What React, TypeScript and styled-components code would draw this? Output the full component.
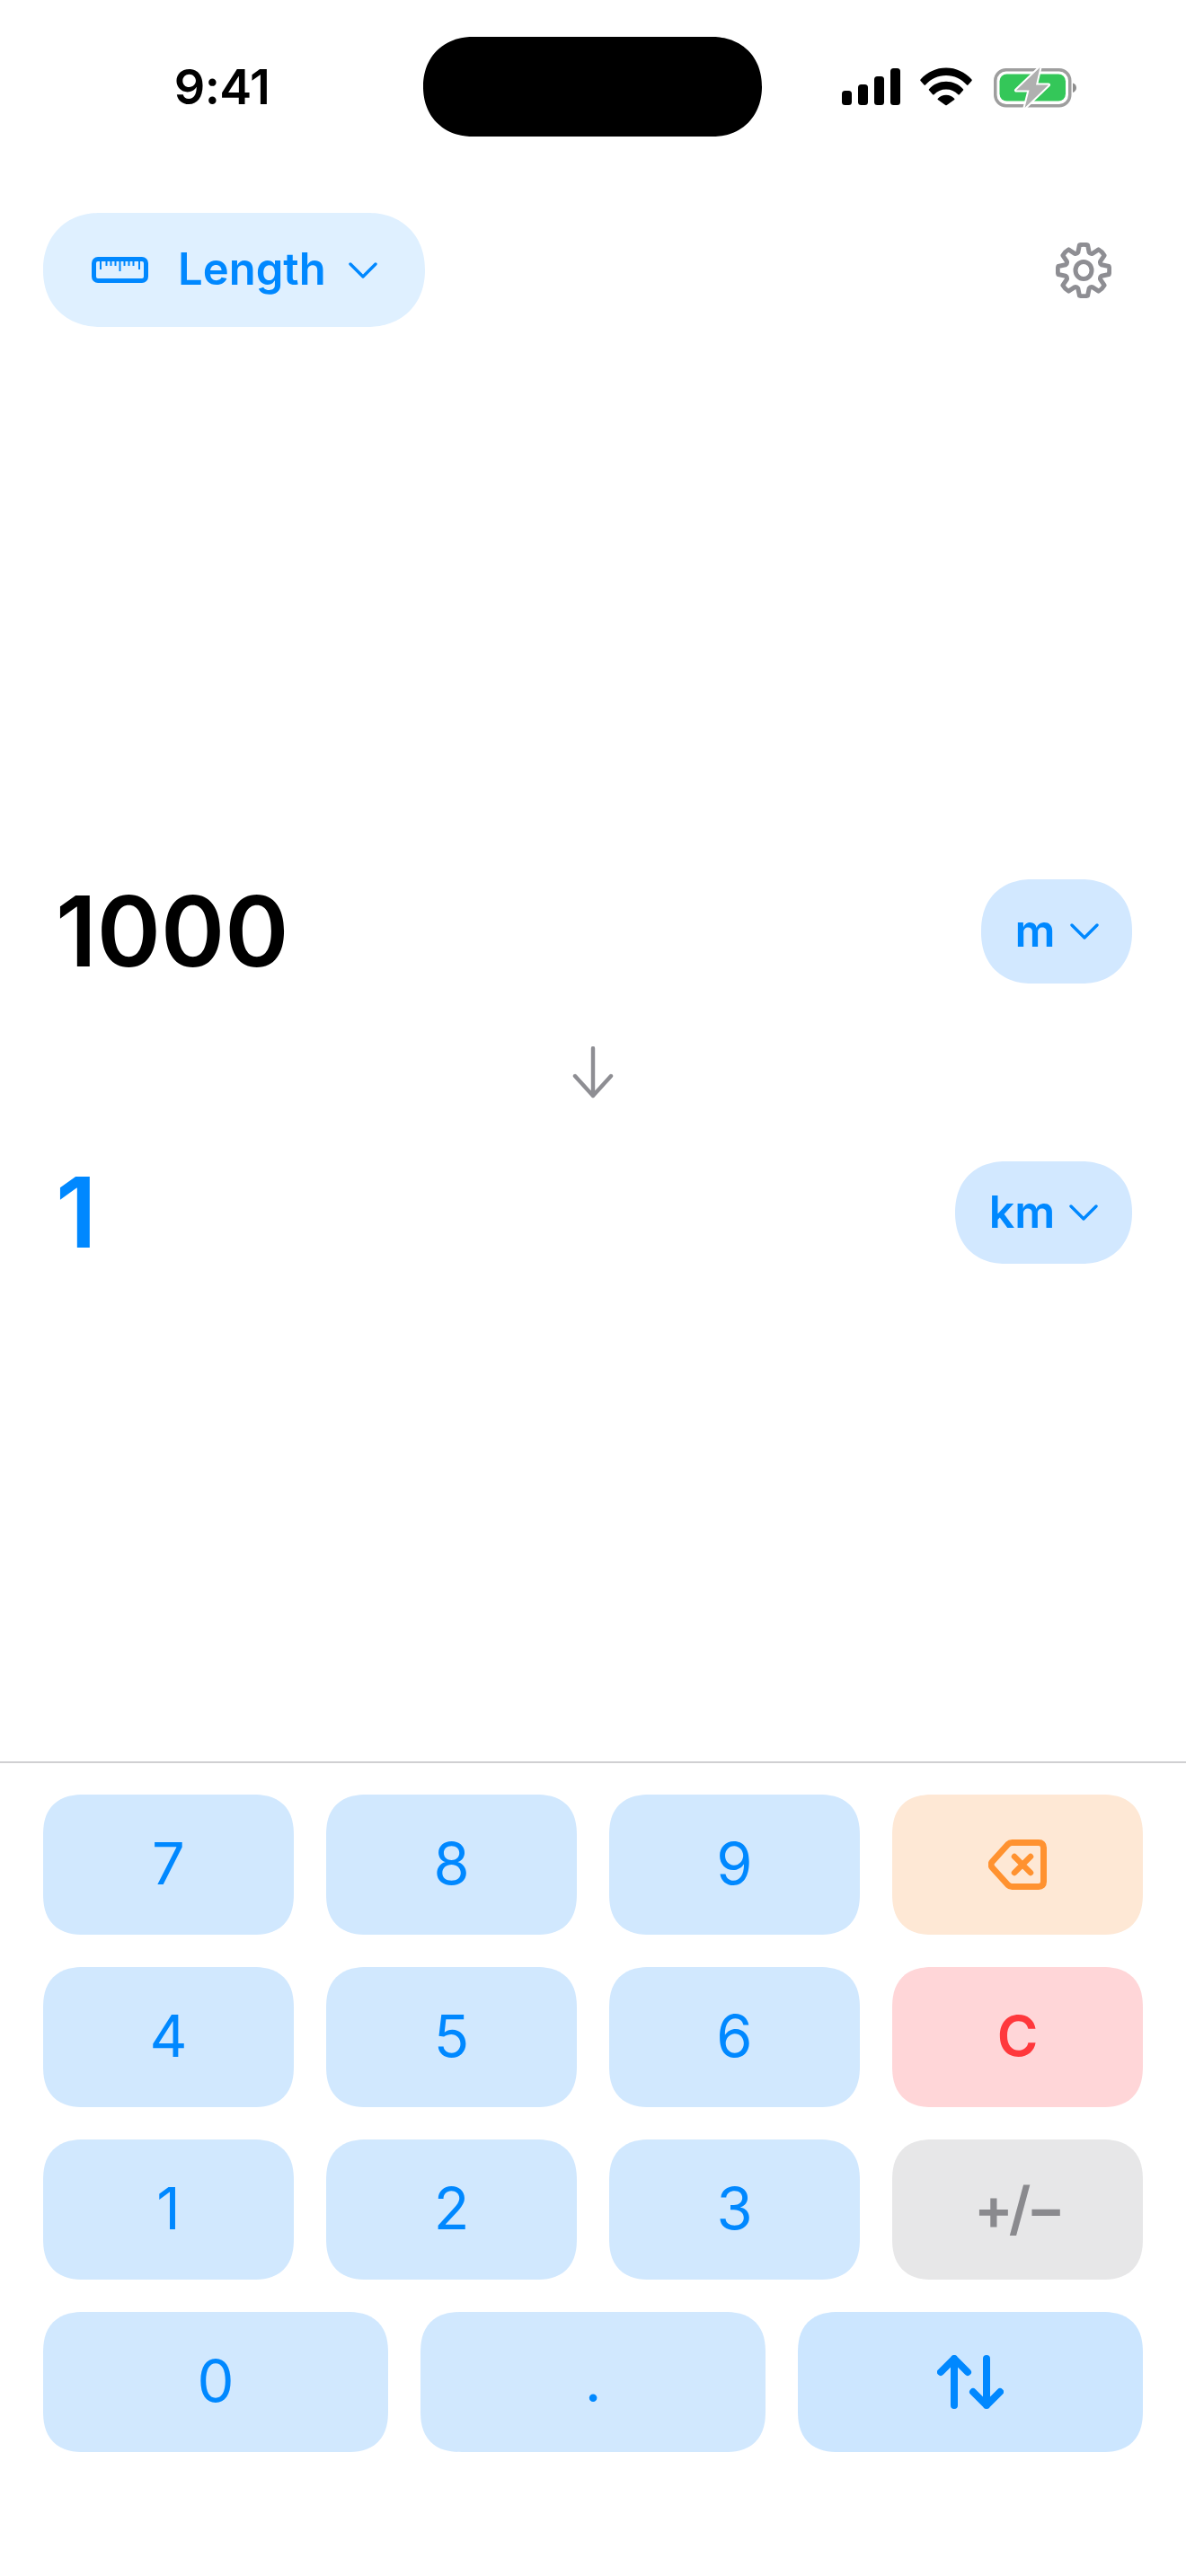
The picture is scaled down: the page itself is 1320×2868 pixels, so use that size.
import React from "react";
import styled, { createGlobalStyle } from "styled-components";

const Global = createGlobalStyle`
  html, body { margin: 0; padding: 0; background: #fff; }
  * { box-sizing: border-box; }
`;
const FONT = `Inter, "Liberation Sans", Arial, sans-serif`;
const BLUE = "#0088ff";

const Screen = styled.div`
  width: 1320px; height: 2868px; background: #fff; font-family: ${FONT};
  display: flex; flex-direction: column; overflow: hidden;
`;
const StatusBar = styled.div`
  height: 152px; padding-top: 41px; display: grid;
  grid-template-columns: 471px 377px 1fr;
`;
const Time = styled.div`
  height: 111px; display: flex; align-items: center; justify-content: center;
  padding-left: 23px; font-size: 54px; font-weight: 600; color: #000; letter-spacing: -0.6px;
`;
const Island = styled.div`
  height: 111px; background: #000; border-radius: 56px; corner-shape: superellipse(1.1);
`;
const StatusIcons = styled.div`
  height: 111px; display: flex; align-items: center; padding-left: 89px;
  svg { display: block; }
`;
const Toolbar = styled.div`
  margin-top: 85px; height: 127px; padding: 0 83px 0 48px;
  display: flex; align-items: center; justify-content: space-between;
`;
const CategoryPill = styled.div`
  width: 425px; height: 127px; border-radius: 63px; background: #dff0ff; color: ${BLUE};
  corner-shape: superellipse(1.1);
  display: flex; align-items: center; padding-left: 54px;
  font-size: 49px; font-weight: 600;
`;
const CategoryLabel = styled.span`
  margin-left: 33px; margin-right: 30px; width: 160px; white-space: nowrap; margin-top: -3px;
`;
const Main = styled.div`
  flex: 1; padding: 615px 60px 0 62px; display: flex; flex-direction: column;
`;
const ValueRow = styled.div<{ $h: number }>`
  height: ${p => p.$h}px; display: flex; align-items: center; justify-content: space-between;
`;
const Value = styled.div<{ $accent?: boolean }>`
  font-size: 108px; font-weight: 560; line-height: 1; color: ${p => (p.$accent ? BLUE : "#000")};
`;
const UnitPill = styled.div<{ $w: number }>`
  width: ${p => p.$w}px; height: 100%; border-radius: 57px; background: #d2e8ff; color: ${BLUE};
  corner-shape: superellipse(1.15);
  display: flex; align-items: center; justify-content: center; gap: 16px;
  font-size: 50px; font-weight: 600;
`;
const UnitLabel = styled.span`
  margin-top: -3px;
`;
const ArrowSlot = styled.div`
  height: 198px; display: flex; align-items: center; justify-content: center; padding-right: 2px;
`;
const Keypad = styled.div`
  height: 907px; border-top: 2px solid #d0d0d2; padding: 35px 48px 0;
  display: flex; flex-direction: column; gap: 36px;
`;
const KeyRow = styled.div<{ $cols: number }>`
  display: grid; grid-template-columns: repeat(${p => p.$cols}, 1fr); gap: 36px;
`;
const Key = styled.div<{ $bg?: string; $fg?: string; $w?: number; $sp?: number; $size?: number }>`
  height: 156px; border-radius: 46px; corner-shape: superellipse(1.3);
  background: ${p => p.$bg ?? "#d1e8fe"}; color: ${p => p.$fg ?? BLUE};
  display: flex; align-items: center; justify-content: center;
  font-size: ${p => p.$size ?? 65}px; font-weight: ${p => p.$w ?? 400}; letter-spacing: ${p => p.$sp ?? 0}px;
`;
const KeyLabel = styled.span`
  margin-top: -3px;
`;

const Signal = () => (
  <svg width="65" height="41" viewBox="0 0 65 41" fill="#000">
    <rect x="0" y="25" width="11" height="16" rx="3.5" />
    <rect x="18" y="18" width="11" height="23" rx="3.5" />
    <rect x="36" y="9" width="11" height="32" rx="3.5" />
    <rect x="54" y="0" width="11" height="41" rx="3.5" />
  </svg>
);
const Wifi = () => (
  <svg width="58" height="43" viewBox="0 0 58 43" style={{ marginLeft: 22 }} fill="#000">
    <path d="M0.5 13.5C8 5.2 18 0.5 29 0.5s21 4.7 28.5 13c.4.5.4 1 0 1.4l-4 4.6c-.5.5-1 .5-1.5 0C46 13 38 9 29 9S12 13 6 19.5c-.5.5-1 .5-1.5 0l-4-4.6c-.4-.4-.4-.9 0-1.4z" />
    <path d="M10 24.2C15 18.8 21.6 15.8 29 15.8s14 3 19 8.4c.4.5.4 1 0 1.4l-4.1 4.6c-.5.5-1 .5-1.5 0-3.6-3.6-8.2-5.6-13.4-5.6s-9.8 2-13.4 5.6c-.5.5-1 .5-1.5 0L10 25.6c-.4-.4-.4-.9 0-1.4z" />
    <path d="M19.8 35.2c2.5-2.5 5.6-3.9 9.2-3.9s6.7 1.4 9.2 3.9c.4.4.4.9 0 1.3l-8.4 6c-.5.4-1.1.4-1.6 0l-8.4-6c-.4-.4-.4-.9 0-1.3z" transform="translate(0 -.5)" />
  </svg>
);
const Battery = () => (
  <svg width="92" height="46" viewBox="0 0 92 46" style={{ marginLeft: 24 }}>
    <rect x="1.75" y="3.75" width="83" height="40" rx="12" fill="none" stroke="#9e9e9e" strokeWidth="3.5" />
    <rect x="6.5" y="8.5" width="73.5" height="30" rx="8" fill="#34c759" />
    <path d="M88 18.5c2.4.5 4 2.7 4 5.2s-1.6 4.7-4 5.2z" fill="#8e8e8e" />
    <path d="M51.5 1 25 26.5h14.5L34.5 46 61 20.5H47z" fill="#b0b0b0" stroke="#fff" strokeWidth="4" strokeLinejoin="round" />
    <path d="M51.5 1 25 26.5h14.5L34.5 46 61 20.5H47z" fill="#b0b0b0" />
  </svg>
);
const RulerIcon = () => (
  <svg width="63" height="29" viewBox="0 0 63 29">
    <rect x="2.5" y="2.5" width="58" height="24" rx="4.5" fill="none" stroke={BLUE} strokeWidth="5" />
    <path d="M10 4v10M16.5 4v6M21.5 4v6M26.5 4v6M31.5 4v12M36.5 4v6M41.5 4v6M46.5 4v6M53 4v10" stroke={BLUE} strokeWidth="2" fill="none" />
  </svg>
);
const Chevron = ({ w, h }: { w: number; h: number }) => (
  <svg width={w} height={h} viewBox={`0 0 ${w} ${h}`} fill="none" stroke={BLUE} strokeWidth="3.4" strokeLinecap="round" strokeLinejoin="round">
    <path d={`M2 2 L${w / 2} ${h - 2} L${w - 2} 2`} />
  </svg>
);
const Gear = () => {
  const teeth = 8, cx = 31, cy = 31, R = 28.5, r = 21;
  let d = "";
  for (let i = 0; i < teeth; i++) {
    const a = (i * 2 * Math.PI) / teeth - Math.PI / 2;
    const pt = (rad: number, off: number) =>
      `${(cx + rad * Math.cos(a + off)).toFixed(2)} ${(cy + rad * Math.sin(a + off)).toFixed(2)}`;
    d += `${i === 0 ? "M" : "L"}${pt(r, -0.3)} L${pt(R, -0.16)} Q${pt(R + 1, 0)} ${pt(R, 0.16)} L${pt(r, 0.3)} Q${pt(r - 1.5, Math.PI / teeth)} `;
    const a2 = a + (2 * Math.PI) / teeth;
    d += `${(cx + r * Math.cos(a2 - 0.3)).toFixed(2)} ${(cy + r * Math.sin(a2 - 0.3)).toFixed(2)} `;
  }
  d += "Z";
  return (
    <svg width="62" height="62" viewBox="0 0 62 62" fill="none" stroke="#8e8e93" strokeWidth="5" strokeLinejoin="round">
      <path d={d} />
      <ellipse cx="31" cy="31" rx="9" ry="9.5" />
    </svg>
  );
};
const DownArrow = () => (
  <svg width="46" height="58" viewBox="0 0 46 58" fill="none" stroke="#8e8e93" strokeWidth="4.4" strokeLinecap="round" strokeLinejoin="round">
    <path d="M23 2V55M3 33 23 55 43 33" />
  </svg>
);
const Backspace = () => (
  <svg width="65" height="56" viewBox="0 0 65 56" fill="none" stroke="#ff9230" strokeLinecap="round" strokeLinejoin="round">
    <path d="M56 3.5H26.5c-2 0-3.4.6-4.8 2L4.5 24.5c-1.8 2-1.8 5 0 7l17.2 19c1.4 1.4 2.8 2 4.8 2H56c3.5 0 5.5-2 5.5-5.5V9c0-3.5-2-5.5-5.5-5.5z" strokeWidth="7" />
    <path d="M29 19 47 37M47 19 29 37" strokeWidth="6.5" />
  </svg>
);
const Swap = () => (
  <svg width="74" height="60" viewBox="0 0 74 60" fill="none" stroke={BLUE} strokeWidth="8" strokeLinecap="round" strokeLinejoin="round">
    <path d="M19 56V4M4 19 19 4 34 19" />
    <path d="M55 4V56M40 41 55 56 70 41" />
  </svg>
);

const rows: string[][] = [["7", "8", "9"], ["4", "5", "6"], ["1", "2", "3"]];

export default function App() {
  return (
    <Screen>
      <Global />
      <StatusBar>
        <Time>9:41</Time>
        <Island />
        <StatusIcons>
          <Signal />
          <Wifi />
          <Battery />
        </StatusIcons>
      </StatusBar>
      <Toolbar>
        <CategoryPill>
          <RulerIcon />
          <CategoryLabel>Length</CategoryLabel>
          <Chevron w={32} h={18} />
        </CategoryPill>
        <Gear />
      </Toolbar>
      <Main>
        <ValueRow $h={116}>
          <Value>1000</Value>
          <UnitPill $w={168}><UnitLabel>m</UnitLabel><Chevron w={32} h={18} /></UnitPill>
        </ValueRow>
        <ArrowSlot><DownArrow /></ArrowSlot>
        <ValueRow $h={114}>
          <Value $accent>1</Value>
          <UnitPill $w={197}><UnitLabel>km</UnitLabel><Chevron w={32} h={18} /></UnitPill>
        </ValueRow>
      </Main>
      <Keypad>
        {rows.map((r, i) => (
          <KeyRow $cols={4} key={i}>
            {r.map(k => <Key key={k}><KeyLabel>{k}</KeyLabel></Key>)}
            {i === 0 && <Key $bg="#fee8d5"><Backspace /></Key>}
            {i === 1 && <Key $bg="#ffd6d8" $fg="#ff383c" $w={600} $size={62}><KeyLabel>C</KeyLabel></Key>}
            {i === 2 && <Key $bg="#e7e7e8" $fg="#8a8a8e" $w={600} $sp={-5}><KeyLabel>+/−</KeyLabel></Key>}
          </KeyRow>
        ))}
        <KeyRow $cols={3}>
          <Key><KeyLabel>0</KeyLabel></Key>
          <Key><KeyLabel>.</KeyLabel></Key>
          <Key $bg="#cce6ff"><Swap /></Key>
        </KeyRow>
      </Keypad>
    </Screen>
  );
}
